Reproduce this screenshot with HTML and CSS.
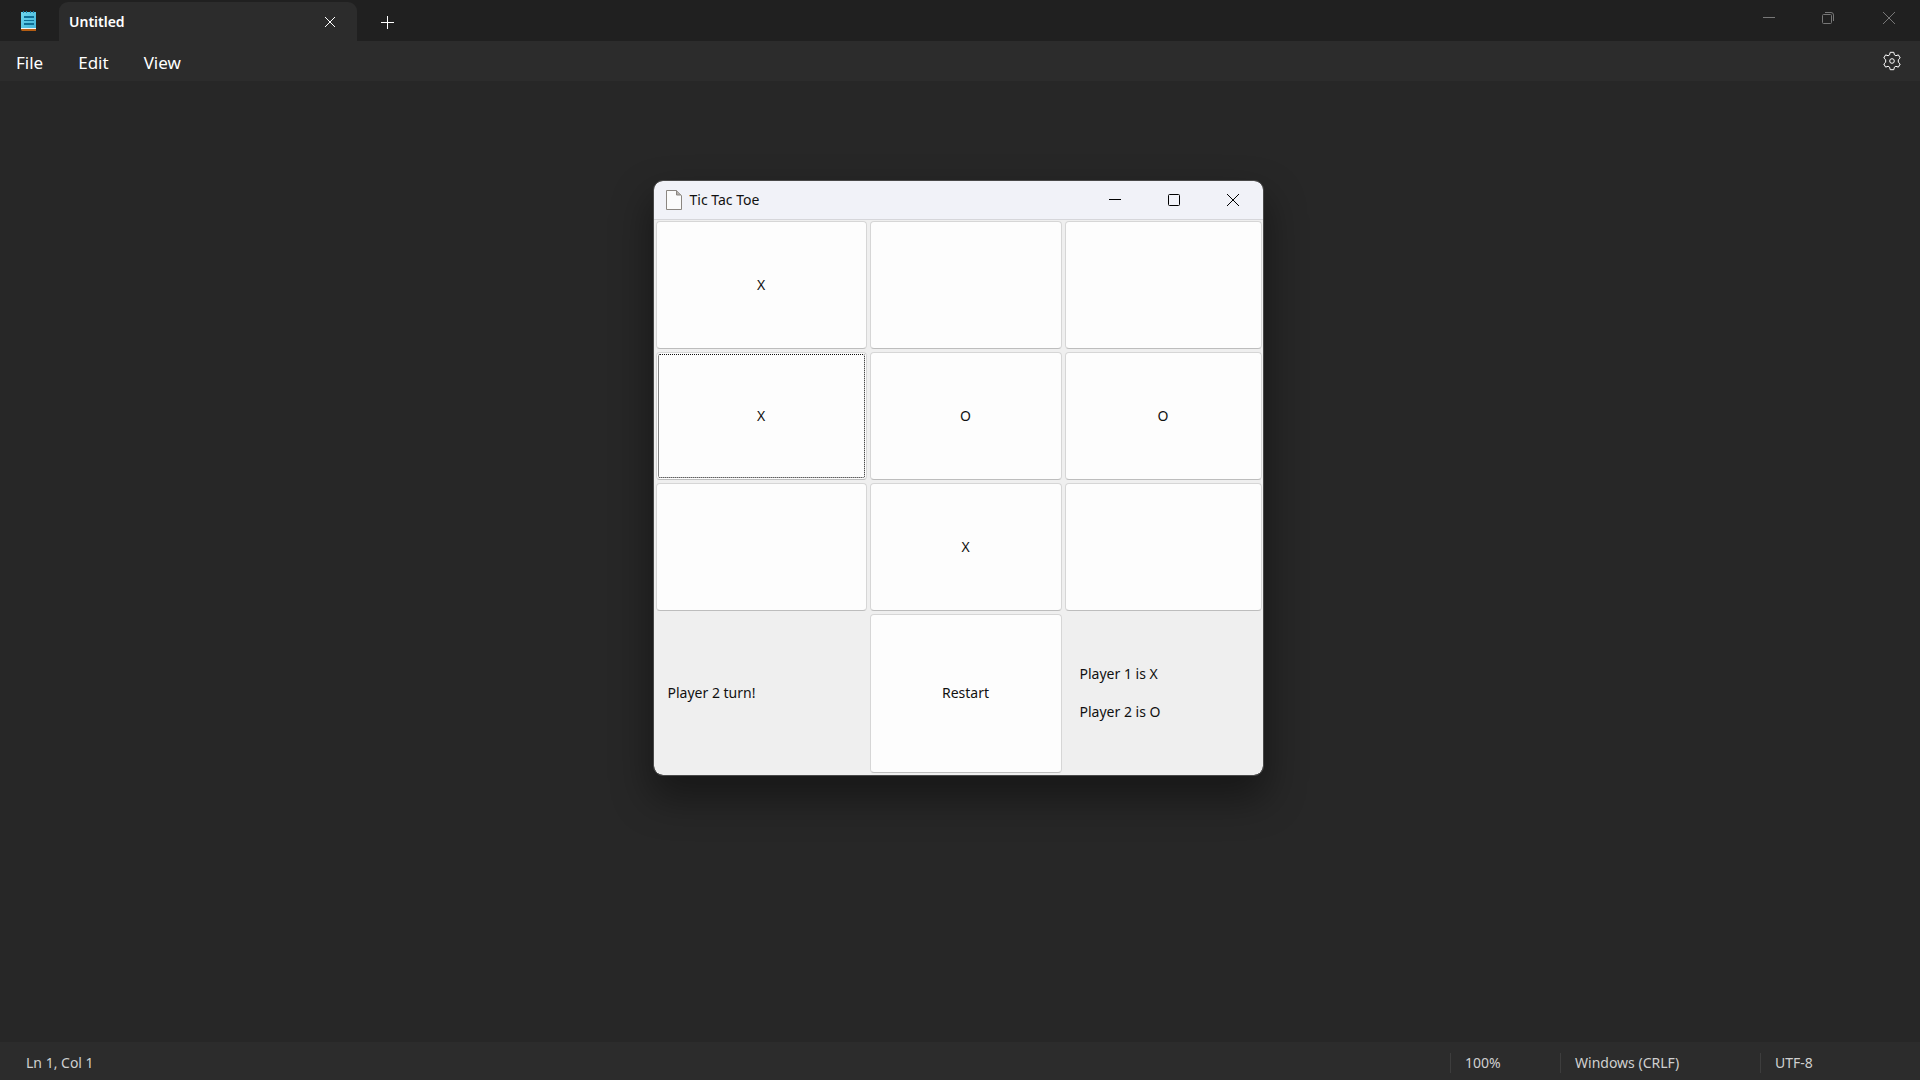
FILE: index.html
```html
<!DOCTYPE html>
<html lang="en">
<head>
<meta charset="utf-8">
<title>Untitled - Notepad</title>
<link rel="stylesheet" href="styles.css">
</head>
<body>
<div class="notepad">
  <header class="tabbar">
    <svg class="app-icon" width="16" height="20" viewBox="0 0 16 20" aria-hidden="true">
      <defs><linearGradient id="paper" x1="0" y1="0" x2="1" y2="1"><stop offset="0" stop-color="#6fd8f0"/><stop offset="1" stop-color="#43b4d8"/></linearGradient></defs>
      <path fill="#b35c12" d="M0 17h15v3H1l-1-1z"/>
      <path fill="#f4f4f4" d="M0 16h15v2H0z"/>
      <path fill="url(#paper)" d="M0 1h15v16H0z"/>
      <path stroke="#0f6f96" stroke-width="2" d="M3 6h10M3 13h10"/>
      <path stroke="#0f6f96" stroke-width="1" d="M3 9.500h10"/>
      <path stroke="#1a7fa5" stroke-width="1" d="M2.500 0v2M5.500 0v2M9.500 0v2M12.500 0v2"/>
    </svg>
    <div class="tab">
      <span class="tab-title">Untitled</span>
      <button class="icon-button" aria-label="Close tab"><svg width="12" height="12" viewBox="0 0 12 12"><path d="M1 1l10 10M11 1L1 11"/></svg></button>
    </div>
    <button class="icon-button new-tab" aria-label="New tab"><svg width="14" height="14" viewBox="0 0 14 14"><path d="M0 7.500h13M6.500 1v13"/></svg></button>
    <div class="window-controls">
      <button class="icon-button" aria-label="Minimize"><svg width="12" height="12" viewBox="0 0 12 12"><path d="M0 5.500h12"/></svg></button>
      <button class="icon-button" aria-label="Restore"><svg width="12" height="12" viewBox="0 0 12 12"><rect x=".5" y="2.500" width="9" height="9" rx="1"/><path d="M3 .5h6a2.500 2.500 0 0 1 2.500 2.500v6"/></svg></button>
      <button class="icon-button" aria-label="Close"><svg width="12" height="12" viewBox="0 0 12 12"><path d="M0 0l12 12M12 0L0 12"/></svg></button>
    </div>
  </header>
  <nav class="menubar">
    <button class="menu">File</button>
    <button class="menu">Edit</button>
    <button class="menu">View</button>
    <button class="icon-button settings" aria-label="Settings"><svg width="20" height="20" viewBox="0 0 20 20"><path stroke-linejoin="round" d="M8.200 1.300h3.600l.6 2.500 1.500.9 2.500-.8 1.800 3.100-1.900 1.800v2.400l1.900 1.800-1.800 3.100-2.500-.8-1.500.9-.6 2.500H8.200l-.6-2.500-1.500-.9-2.500.8L1.800 13l1.900-1.800V8.800L1.800 7l1.800-3.100 2.500.8 1.500-.9z"/><circle cx="10" cy="10" r="2.300"/></svg></button>
  </nav>
  <main class="editor">
    <section class="dialog" aria-label="Tic Tac Toe">
      <header class="dialog-bar">
        <svg width="16" height="20" viewBox="0 0 16 20" aria-hidden="true"><path fill="#fbfbfb" stroke="#8b8681" d="M.5.5h10l5 5v14H.5z"/><path fill="#b5b1ac" stroke="#8b8681" d="M10.500.5v4.500h4.500"/></svg>
        <h1 class="dialog-title">Tic Tac Toe</h1>
        <div class="dialog-controls">
          <button class="icon-button" aria-label="Minimize"><svg width="12" height="12" viewBox="0 0 12 12"><path d="M0 5.500h12"/></svg></button>
          <button class="icon-button" aria-label="Maximize"><svg width="12" height="12" viewBox="0 0 12 12"><rect x=".5" y=".5" width="11" height="11" rx="1"/></svg></button>
          <button class="icon-button" aria-label="Close"><svg width="12" height="12" viewBox="0 0 12 12"><path d="M0 0l12 12M12 0L0 12"/></svg></button>
        </div>
      </header>
      <div class="board">
        <button class="cell">X</button>
        <button class="cell" aria-label="Empty"></button>
        <button class="cell" aria-label="Empty"></button>
        <button class="cell current">X</button>
        <button class="cell">O</button>
        <button class="cell">O</button>
        <button class="cell" aria-label="Empty"></button>
        <button class="cell">X</button>
        <button class="cell" aria-label="Empty"></button>
        <p class="turn">Player 2 turn!</p>
        <button class="cell">Restart</button>
        <div class="legend"><p>Player 1 is X</p><p>Player 2 is O</p></div>
      </div>
    </section>
  </main>
  <footer class="statusbar">
    <span class="position">Ln 1, Col 1</span>
    <span class="status zoom">100%</span>
    <span class="status ending">Windows (CRLF)</span>
    <span class="status encoding">UTF-8</span>
  </footer>
</div>
</body>
</html>
```
FILE: styles.css
```css
* { box-sizing: border-box; }
body, p, h1 { margin: 0; }
body {
  background: #272727;
  color: #fff;
  font: 14px/20px "Noto Sans", "Open Sans", sans-serif;
}
button {
  padding: 0;
  border: 0;
  background: none;
  color: inherit;
  font: inherit;
}
svg { display: block; }
.notepad { display: flex; flex-direction: column; min-height: 100vh; }
.icon-button { display: grid; place-items: center; }
.icon-button svg { fill: none; stroke: currentColor; }

.tabbar { display: flex; height: 41px; padding-left: 21px; background: #202020; }
.app-icon { margin-top: 11px; }
.tab {
  display: flex;
  align-items: center;
  justify-content: space-between;
  width: 298px;
  margin: 2px 0 0 22px;
  padding: 0 21px 0 10px;
  border-radius: 9px 9px 0 0;
  background: #2c2c2c;
}
.tab-title { font-weight: 600; }
.new-tab { width: 62px; padding-top: 2px; }
.window-controls { display: flex; height: 36px; margin-left: auto; color: #777; }
.window-controls button, .dialog-controls button { width: 59px; }
.window-controls button:last-child { width: 63px; }

.menubar { display: flex; height: 40px; padding: 0 18px 0 16px; background: #2c2c2c; font-size: 17px; }
.menu { margin-right: 35px; padding-top: 3px; }
.settings { margin-left: auto; }

.editor { flex: 1; padding: 100px 20px 100px 16px; }
.dialog {
  width: 609px;
  max-width: 100%;
  margin: 0 auto;
  overflow: hidden;
  border-radius: 9px;
  outline: 1px solid #494949;
  background: #efefef;
  color: #111;
  box-shadow: 0 20px 38px 4px rgba(0, 0, 0, .4);
}
.dialog-bar {
  display: flex;
  align-items: center;
  gap: 8px;
  height: 39px;
  padding: 0 0 1px 12px;
  border-bottom: 1px solid #d6d6da;
  background: #f1f2f8;
}
.dialog-title { font-size: 14px; font-weight: 400; }
.dialog-controls { display: flex; align-self: stretch; margin-left: auto; color: #000; }
.board {
  display: grid;
  grid-template-columns: 211fr 192fr 197fr;
  grid-template-rows: repeat(3, 128px) 159px;
  gap: 3px;
  padding: 1px 1px 2px 2px;
}
.cell {
  padding-bottom: 1px;
  border: 1px solid #d6d6d6;
  border-bottom-color: #bdbdbd;
  border-radius: 4px;
  background: #fdfdfd;
}
.current { outline: 1px dotted #111; outline-offset: -3px; }
.turn { align-self: center; padding: 0 0 1px 12px; }
.legend { display: grid; align-content: center; gap: 18px; padding: 0 0 1px 15px; }

.statusbar {
  display: flex;
  align-items: center;
  height: 38px;
  padding: 3px 0 0 26px;
  background: #2c2c2c;
  color: #d0d0d0;
}
.position { margin-right: auto; }
.status { padding-left: 14px; border-left: 1px solid #3d3d3d; }
.zoom { width: 110px; }
.ending { width: 200px; }
.encoding { width: 160px; }
```
